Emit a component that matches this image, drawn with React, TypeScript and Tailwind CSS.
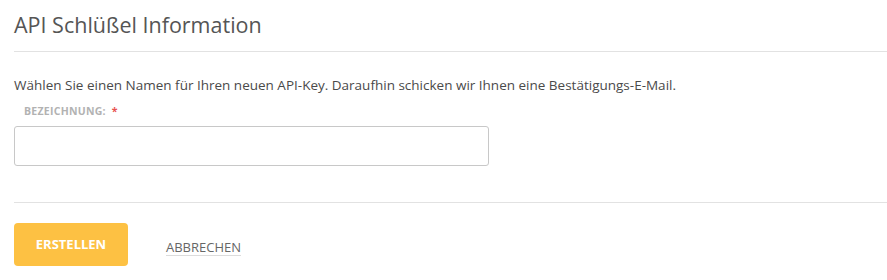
export default function App() {
    return (
        <div className="w-[887px] h-[280px] bg-white text-[#4a4a4a]" style={{fontFamily: '"Open Sans", "Noto Sans", sans-serif'}}>
            <div className="pl-[14px]">
                <h1 className="pt-[10px] h-[52px] text-[21.5px] leading-[30px] text-[#555] border-b border-[#e2e2e2]">
                    API Schlüßel Information
                </h1>

                <p className="mt-[24px] text-[13.5px] leading-[18px] text-[#4a4a4a]">
                    Wählen Sie einen Namen für Ihren neuen API-Key. Daraufhin schicken wir Ihnen eine Bestätigungs-E-Mail.
                </p>

                <label className="block mt-[11px] pl-[10px] text-[10.5px] font-bold tracking-wide leading-[12px] text-[#b2b2b2]">
                    BEZEICHNUNG:<span className="ml-[6px] text-[#e8534f]">*</span>
                </label>
                <input
                    type="text"
                    className="block mt-[9px] w-[475px] h-[40px] rounded-[3px] border border-[#c8c8c8] px-3 text-[13px] outline-none"
                />

                <div className="mt-[36px] border-t border-[#e2e2e2]"/>

                <div className="mt-[20px] flex items-center gap-[38px]">
                    <button className="w-[114px] h-[43px] rounded-[4px] bg-[#fdc143] text-white text-[13px] font-bold">
                        ERSTELLEN
                    </button>
                    <a href="#" className="text-[13px] leading-[16px] text-[#666] border-b border-[#dcdcdc] pt-[6px]">
                        ABBRECHEN
                    </a>
                </div>
            </div>
        </div>
    );
}
